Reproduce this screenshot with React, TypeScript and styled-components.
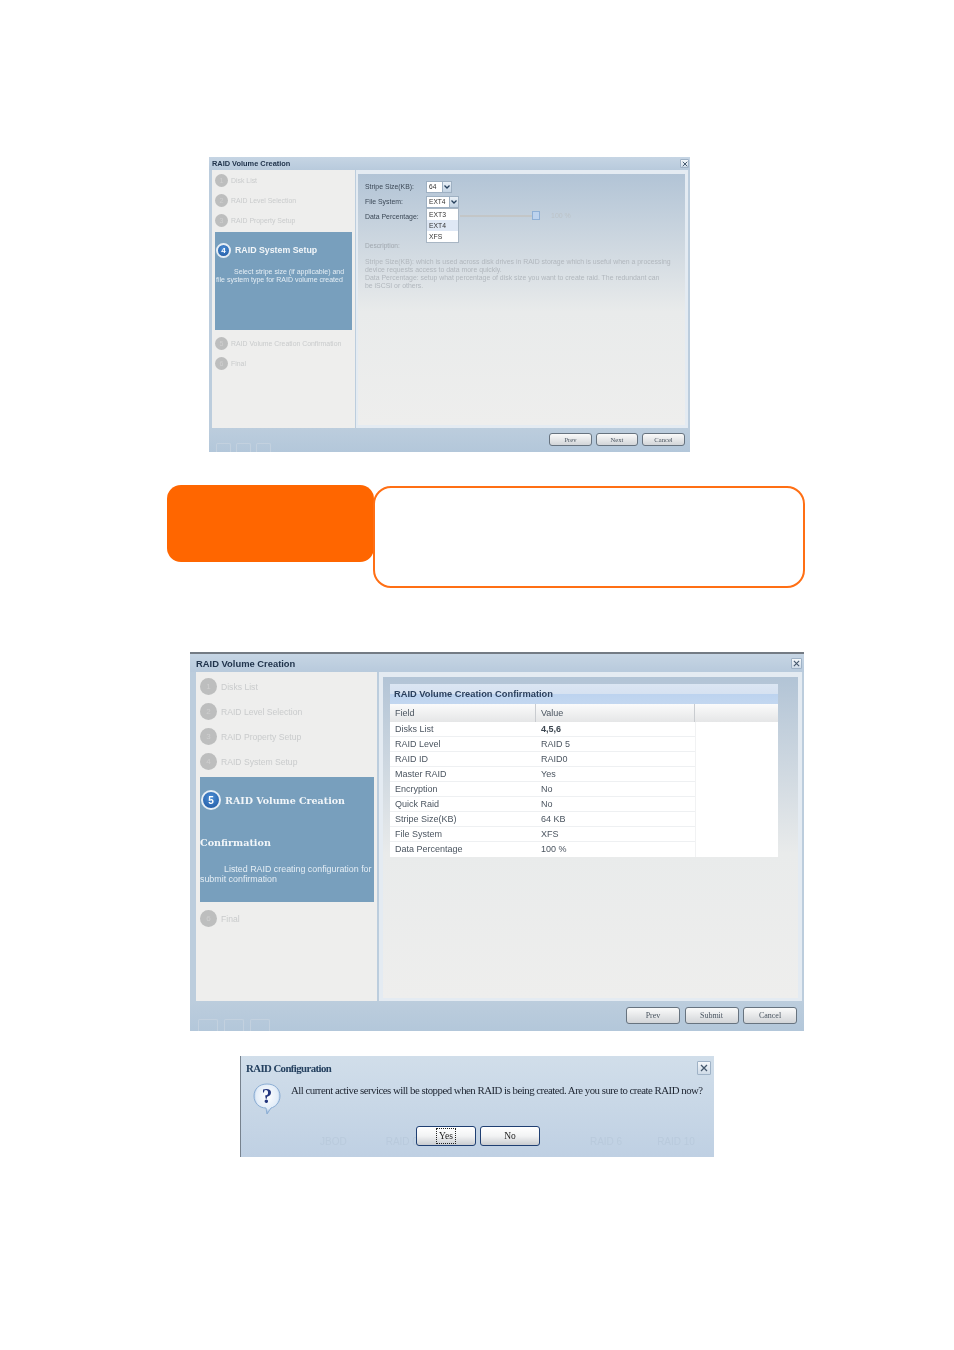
import React from 'react';
import styled, { createGlobalStyle } from 'styled-components';

const GlobalStyle = createGlobalStyle`
  html, body {
    margin: 0;
    padding: 0;
    background: #ffffff;
  }
  body {
    font-family: "Liberation Sans", Arial, sans-serif;
  }
`;

const Page = styled.div`
  width: 954px;
  height: 1350px;
  padding-top: 157px;
  box-sizing: border-box;
  overflow: hidden;
`;

const Window = styled.div<{ $large?: boolean }>`
  position: relative;
  display: flex;
  flex-direction: column;
  width: ${p => (p.$large ? '614px' : '481px')};
  height: ${p => (p.$large ? '379px' : '295px')};
  margin-left: ${p => (p.$large ? '190px' : '209px')};
  margin-top: ${p => (p.$large ? '64px' : '0')};
  background: #bccddd;
  border-top: ${p => (p.$large ? '2px solid #747b84' : '0')};
  box-sizing: border-box;
  filter: blur(${p => (p.$large ? '0.5px' : '0.25px')});
`;

const TitleBar = styled.div<{ $large?: boolean }>`
  display: flex;
  align-items: center;
  justify-content: space-between;
  flex: none;
  height: ${p => (p.$large ? '18px' : '13px')};
  padding: ${p => (p.$large ? '0 2px 0 6px' : '0 1px 0 3px')};
  background: linear-gradient(#c6d5e4, #b8cadc);
  color: #21344c;
  font-size: ${p => (p.$large ? '9.4px' : '7.4px')};
  font-weight: 700;
`;

const CloseBox = styled.span<{ $size: number }>`
  display: flex;
  align-items: center;
  justify-content: center;
  width: ${p => p.$size}px;
  height: ${p => p.$size}px;
  background: linear-gradient(#f4f7fa, #cfdbe8);
  border: 1px solid #9fb2c6;
  border-radius: 1px;
  box-sizing: border-box;
  color: #44576c;
`;

const Body = styled.div<{ $large?: boolean }>`
  display: flex;
  flex: none;
  height: ${p => (p.$large ? '329px' : '258px')};
  gap: ${p => (p.$large ? '2px' : '1px')};
  padding-left: ${p => (p.$large ? '6px' : '3px')};
`;

const Sidebar = styled.div<{ $large?: boolean }>`
  display: flex;
  flex-direction: column;
  flex: none;
  width: ${p => (p.$large ? '181px' : '143px')};
  padding: ${p => (p.$large ? '2px 3px 0 4px' : '0 3px 0 3px')};
  box-sizing: border-box;
  background: #eeeeed;
`;

const Step = styled.div<{ $large?: boolean }>`
  display: flex;
  align-items: center;
  flex: none;
  height: ${p => (p.$large ? '25px' : '20px')};
  gap: ${p => (p.$large ? '4px' : '3px')};
  color: #c9cbcc;
  font-size: ${p => (p.$large ? '8.6px' : '6.9px')};
  white-space: nowrap;
`;

const StepDot = styled.span<{ $large?: boolean }>`
  display: flex;
  align-items: center;
  justify-content: center;
  flex: none;
  width: ${p => (p.$large ? '17px' : '13px')};
  height: ${p => (p.$large ? '17px' : '13px')};
  border-radius: 50%;
  background: #bdbebe;
  color: #cfcfcf;
  font-size: ${p => (p.$large ? '8px' : '7px')};
`;

const ActivePanel = styled.div<{ $large?: boolean }>`
  flex: none;
  height: ${p => (p.$large ? '125px' : '98px')};
  margin: ${p => (p.$large ? '3px 0 4px' : '2px 0 3px')};
  padding-top: ${p => (p.$large ? '13px' : '8px')};
  box-sizing: border-box;
  background: #789fbd;
  color: #ffffff;
`;

const ActiveHead = styled.div<{ $large?: boolean }>`
  display: flex;
  align-items: center;
  height: 20px;
  gap: 4px;
  padding-left: 1px;
  font-family: ${p => (p.$large ? '"DejaVu Serif", serif' : '"Liberation Sans", sans-serif')};
  font-size: ${p => (p.$large ? '9.5px' : '8.8px')};
  font-weight: 700;
  color: #f2f6f9;
  white-space: nowrap;
`;

const ActiveDot = styled.span<{ $large?: boolean }>`
  display: flex;
  align-items: center;
  justify-content: center;
  flex: none;
  width: ${p => (p.$large ? '20px' : '15px')};
  height: ${p => (p.$large ? '20px' : '15px')};
  box-sizing: border-box;
  border: 2px solid #e6eef5;
  border-radius: 50%;
  background: radial-gradient(circle at 50% 35%, #4d8fd6, #1d559f);
  color: #ffffff;
  font-family: "Liberation Sans", sans-serif;
  font-size: ${p => (p.$large ? '10px' : '8px')};
  font-weight: 700;
`;

const TitleTail = styled.div`
  height: 20px;
  margin-top: 23px;
  line-height: 20px;
  font-family: "DejaVu Serif", serif;
  font-size: 9.6px;
  font-weight: 700;
  color: #f2f6f9;
`;

const ActiveText = styled.div<{ $large?: boolean }>`
  margin-top: ${p => (p.$large ? '11px' : '8px')};
  padding-left: ${p => (p.$large ? '0' : '1px')};
  font-size: ${p => (p.$large ? '8.9px' : '7px')};
  line-height: ${p => (p.$large ? '10px' : '8px')};
  white-space: nowrap;
  color: #e4edf4;
`;

const Indent = styled.span<{ $width: number }>`
  display: inline-block;
  width: ${p => p.$width}px;
`;

const Content = styled.div<{ $large?: boolean }>`
  display: flex;
  flex: none;
  width: ${p => (p.$large ? '423px' : '332px')};
  padding: ${p => (p.$large ? '5px 4px 3px 4px' : '4px 3px 3px 2px')};
  box-sizing: border-box;
  background: #e4ebf2;
`;

const ContentInner = styled.div<{ $large?: boolean }>`
  position: relative;
  flex: 1;
  padding: ${p => (p.$large ? '7px 20px 0 7px' : '5px 12px 0 7px')};
  background: linear-gradient(#b2c4d6 0%, #d0d9e1 30%, #e9ebeb 55%, #eeeeed 100%);
`;

const FormRow = styled.div`
  display: flex;
  align-items: center;
  height: 15px;
  color: #3b4856;
  font-size: 6.9px;
`;

const FormLabel = styled.span`
  flex: none;
  width: 61px;
`;

const SelectBox = styled.span<{ $width: number }>`
  display: flex;
  align-items: center;
  width: ${p => p.$width}px;
  height: 12px;
  padding-left: 2px;
  box-sizing: border-box;
  background: #ffffff;
  border: 1px solid #9eb0c2;
  border-right: 0;
  color: #333333;
  font-size: 6.6px;
`;

const SelectArrow = styled.span`
  display: flex;
  align-items: center;
  justify-content: center;
  width: 10px;
  height: 12px;
  box-sizing: border-box;
  background: linear-gradient(#e9f0f7, #c3d3e3);
  border: 1px solid #9eb0c2;
  color: #27405c;
`;

const SliderTrack = styled.span`
  position: absolute;
  left: 102px;
  top: 41px;
  width: 74px;
  height: 2px;
  background: #c3c6c7;
`;

const SliderThumb = styled.span`
  position: absolute;
  left: 174px;
  top: 37px;
  width: 8px;
  height: 9px;
  box-sizing: border-box;
  background: #bdd3ee;
  border: 1px solid #8fb0d6;
`;

const SliderValue = styled.span`
  position: absolute;
  left: 193px;
  top: 38px;
  color: #bcc3c8;
  font-size: 7px;
`;

const Dropdown = styled.div`
  position: absolute;
  left: 68px;
  top: 34px;
  width: 33px;
  height: 35px;
  box-sizing: border-box;
  background: #ffffff;
  border: 1px solid #a8b6c4;
  z-index: 2;
`;

const DropdownItem = styled.div<{ $active?: boolean }>`
  height: 11px;
  padding-left: 2px;
  line-height: 11px;
  color: #333333;
  font-size: 6.8px;
  background: ${p => (p.$active ? '#dfe8f5' : 'transparent')};
`;

const DescriptionHead = styled.div`
  margin-top: 18px;
  color: #a1a8af;
  font-size: 6.6px;
  line-height: 8px;
`;

const DescriptionText = styled.div`
  margin-top: 8px;
  color: #b1b7bd;
  font-size: 6.9px;
  line-height: 8px;
  white-space: nowrap;
`;

const TableHost = styled.div`
  width: 388px;
`;

const TableTitle = styled.div`
  height: 20px;
  padding-left: 4px;
  line-height: 20px;
  box-sizing: border-box;
  background: linear-gradient(#dbe6f3 0%, #d6e2f1 48%, #bcd3ef 50%, #c3d7f0 100%);
  color: #2a3f5c;
  font-size: 9.3px;
  font-weight: 700;
`;

const TableGrid = styled.div`
  display: grid;
  grid-template-columns: 146px 159px 83px;
  background: #ffffff;
`;

const HeadCell = styled.div<{ $end?: boolean }>`
  display: flex;
  align-items: center;
  height: 18px;
  padding-left: 5px;
  box-sizing: border-box;
  background: linear-gradient(#fbfbfb, #e5e6e7);
  border-right: 1px solid ${p => (p.$end ? 'transparent' : '#c9ccd0')};
  color: #4b5560;
  font-size: 9px;
`;

const Cell = styled.div<{ $strong?: boolean; $last?: boolean }>`
  display: flex;
  align-items: center;
  height: 15px;
  padding-left: 5px;
  box-sizing: border-box;
  border-bottom: 1px solid ${p => (p.$last ? 'transparent' : '#eef0f2')};
  color: ${p => (p.$strong ? '#3c4650' : '#4b5560')};
  font-size: 9px;
  font-weight: ${p => (p.$strong ? 700 : 400)};
`;

const EmptyCell = styled.div`
  height: 15px;
  border-left: 1px solid #f1f2f3;
`;

const Footer = styled.div<{ $large?: boolean }>`
  position: relative;
  flex: 1;
  display: flex;
  justify-content: flex-end;
  align-items: flex-start;
  gap: ${p => (p.$large ? '4.5px' : '4px')};
  padding: ${p => (p.$large ? '6px 7px 0 0' : '5px 5px 0 0')};
  background: linear-gradient(#bccddd, #b3c7da);
`;

const WizardButton = styled.button<{ $large?: boolean; $width: number }>`
  width: ${p => p.$width}px;
  height: ${p => (p.$large ? '17px' : '13px')};
  padding: 0;
  background: linear-gradient(#fafafa, #d2d5d8);
  border: 1px solid #67737f;
  border-radius: 3px;
  color: #4a5560;
  font-family: "Liberation Serif", serif;
  font-size: ${p => (p.$large ? '8px' : '6.6px')};
`;

const GhostBar = styled.div<{ $large?: boolean }>`
  position: absolute;
  left: ${p => (p.$large ? '8px' : '7px')};
  bottom: 0;
  display: flex;
  gap: ${p => (p.$large ? '6px' : '5px')};
`;

const GhostIcon = styled.span<{ $large?: boolean }>`
  width: ${p => (p.$large ? '20px' : '15px')};
  height: ${p => (p.$large ? '12px' : '9px')};
  border: 1px solid #c3d1df;
  border-bottom: 0;
  border-radius: 2px 2px 0 0;
  box-sizing: border-box;
`;

const CalloutRow = styled.div`
  display: flex;
  align-items: flex-start;
  margin: 33px 0 0 167px;
`;

const CalloutTag = styled.div`
  flex: none;
  width: 207px;
  height: 77px;
  background: #ff6600;
  border-radius: 14px;
`;

const CalloutBox = styled.div`
  flex: none;
  width: 432px;
  height: 102px;
  margin: 1px 0 0 -1px;
  box-sizing: border-box;
  background: #ffffff;
  border: 2px solid #ff6f14;
  border-radius: 18px;
`;

const Dialog = styled.div`
  position: relative;
  width: 474px;
  height: 101px;
  margin: 25px 0 0 240px;
  box-sizing: border-box;
  background: linear-gradient(#d1deea, #bfd0e3);
  border-left: 1px solid #77828e;
  filter: blur(0.25px);
`;

const DialogTitleRow = styled.div`
  display: flex;
  align-items: center;
  justify-content: space-between;
  height: 24px;
  padding: 0 3px 0 5px;
  color: #24405f;
  font-family: "Liberation Serif", serif;
  font-size: 10.8px;
  font-weight: 700;
  letter-spacing: -0.58px;
`;

const DialogBody = styled.div`
  display: flex;
  align-items: flex-start;
  height: 46px;
  padding-left: 11px;
  gap: 9px;
`;

const QuestionIcon = styled.span`
  flex: none;
  margin-top: 2px;
`;

const DialogMessage = styled.div`
  margin-top: 4px;
  color: #1d2430;
  font-family: "Liberation Serif", serif;
  font-size: 10.8px;
  letter-spacing: -0.49px;
  white-space: nowrap;
`;

const DialogActions = styled.div`
  position: relative;
  display: flex;
  justify-content: center;
  gap: 4px;
  padding-left: 1px;
  z-index: 1;
`;

const DialogButton = styled.button`
  display: flex;
  align-items: center;
  justify-content: center;
  width: 60px;
  height: 20px;
  padding: 0;
  background: linear-gradient(#ffffff 0%, #f2f3f4 50%, #c9ccd0 100%);
  border: 1px solid #1f3f72;
  border-radius: 3px;
  color: #222222;
  font-family: "Liberation Serif", serif;
  font-size: 9.5px;
`;

const FocusText = styled.span`
  padding: 0 2px;
  outline: 1px dotted #222222;
  line-height: 14px;
`;

const GhostRow = styled.div`
  position: absolute;
  left: 79px;
  bottom: 10px;
  display: flex;
  color: #b9cadc;
  font-size: 10px;
`;

const GhostLabel = styled.span<{ $gap: number }>`
  margin-left: ${p => p.$gap}px;
`;

const Chevron = () => (
  <svg width="6" height="4" viewBox="0 0 6 4">
    <path d="M0.5 0.5 L3 3 L5.5 0.5" fill="none" stroke="currentColor" strokeWidth="1.3" />
  </svg>
);

const CloseIcon = ({ size }: { size: number }) => (
  <svg width={size} height={size} viewBox="0 0 8 8">
    <path d="M1 1 L7 7 M7 1 L1 7" stroke="currentColor" strokeWidth="1.3" />
  </svg>
);

const BubbleIcon = () => (
  <svg width="30" height="34" viewBox="0 0 30 34">
    <defs>
      <radialGradient id="bubble" cx="50%" cy="40%" r="60%">
        <stop offset="0%" stopColor="#ffffff" />
        <stop offset="70%" stopColor="#e3edf8" />
        <stop offset="100%" stopColor="#7fa6d3" />
      </radialGradient>
    </defs>
    <path
      d="M15 2 C23 2 28 7 28 14 C28 21 23 25 19 26 L15 32 L14 26 C7 26 2 21 2 14 C2 7 7 2 15 2 Z"
      fill="url(#bubble)"
      stroke="#8caed4"
      strokeWidth="1"
    />
    <text x="15" y="21" textAnchor="middle" fontFamily="Liberation Serif, serif" fontSize="21" fontWeight="700" fill="#23367e">
      ?
    </text>
  </svg>
);

const confirmRows = [
  ['Disks List', '4,5,6'],
  ['RAID Level', 'RAID 5'],
  ['RAID ID', 'RAID0'],
  ['Master RAID', 'Yes'],
  ['Encryption', 'No'],
  ['Quick Raid', 'No'],
  ['Stripe Size(KB)', '64 KB'],
  ['File System', 'XFS'],
  ['Data Percentage', '100 %'],
];

const WizardSteps = ({ items, large, start }: { items: string[]; large?: boolean; start: number }) => (
  <>
    {items.map((label, i) => (
      <Step key={label} $large={large}>
        <StepDot $large={large}>{start + i}</StepDot>
        {label}
      </Step>
    ))}
  </>
);

const WizardFooter = ({ large, next }: { large?: boolean; next: string }) => {
  const widths = large ? [54, 54, 54] : [43, 42, 43];
  return (
    <Footer $large={large}>
      <GhostBar $large={large}>
        <GhostIcon $large={large} />
        <GhostIcon $large={large} />
        <GhostIcon $large={large} />
      </GhostBar>
      <WizardButton $large={large} $width={widths[0]}>Prev</WizardButton>
      <WizardButton $large={large} $width={widths[1]}>{next}</WizardButton>
      <WizardButton $large={large} $width={widths[2]}>Cancel</WizardButton>
    </Footer>
  );
};

const SystemSetupWindow = () => (
  <Window>
    <TitleBar>
      RAID Volume Creation
      <CloseBox $size={9}><CloseIcon size={6} /></CloseBox>
    </TitleBar>
    <Body>
      <Sidebar>
        <WizardSteps items={['Disk List', 'RAID Level Selection', 'RAID Property Setup']} start={1} />
        <ActivePanel>
          <ActiveHead>
            <ActiveDot>4</ActiveDot>
            RAID System Setup
          </ActiveHead>
          <ActiveText>
            <Indent $width={18} />Select stripe size (if applicable) and<br />
            file system type for RAID volume created
          </ActiveText>
        </ActivePanel>
        <WizardSteps items={['RAID Volume Creation Confirmation', 'Final']} start={5} />
      </Sidebar>
      <Content>
        <ContentInner>
          <FormRow>
            <FormLabel>Stripe Size(KB):</FormLabel>
            <SelectBox $width={16}>64</SelectBox>
            <SelectArrow><Chevron /></SelectArrow>
          </FormRow>
          <FormRow>
            <FormLabel>File System:</FormLabel>
            <SelectBox $width={23}>EXT4</SelectBox>
            <SelectArrow><Chevron /></SelectArrow>
          </FormRow>
          <FormRow>
            <FormLabel>Data Percentage:</FormLabel>
          </FormRow>
          <SliderTrack />
          <SliderThumb />
          <SliderValue>100 %</SliderValue>
          <Dropdown>
            <DropdownItem>EXT3</DropdownItem>
            <DropdownItem $active>EXT4</DropdownItem>
            <DropdownItem>XFS</DropdownItem>
          </Dropdown>
          <DescriptionHead>Description:</DescriptionHead>
          <DescriptionText>
            Stripe Size(KB): which is used across disk drives in RAID storage which is useful when a processing<br />
            device requests access to data more quickly.<br />
            Data Percentage: setup what percentage of disk size you want to create raid. The redundant can<br />
            be iSCSI or others.
          </DescriptionText>
        </ContentInner>
      </Content>
    </Body>
    <WizardFooter next="Next" />
  </Window>
);

const ConfirmationWindow = () => (
  <Window $large>
    <TitleBar $large>
      RAID Volume Creation
      <CloseBox $size={11}><CloseIcon size={7} /></CloseBox>
    </TitleBar>
    <Body $large>
      <Sidebar $large>
        <WizardSteps large items={['Disks List', 'RAID Level Selection', 'RAID Property Setup', 'RAID System Setup']} start={1} />
        <ActivePanel $large>
          <ActiveHead $large>
            <ActiveDot $large>5</ActiveDot>
            RAID Volume Creation
          </ActiveHead>
          <TitleTail>Confirmation</TitleTail>
          <ActiveText $large>
            <Indent $width={24} />Listed RAID creating configuration for<br />
            submit confirmation
          </ActiveText>
        </ActivePanel>
        <WizardSteps large items={['Final']} start={6} />
      </Sidebar>
      <Content $large>
        <ContentInner $large>
          <TableHost>
            <TableTitle>RAID Volume Creation Confirmation</TableTitle>
            <TableGrid>
              <HeadCell>Field</HeadCell>
              <HeadCell>Value</HeadCell>
              <HeadCell $end />
              {confirmRows.map(([field, value], i) => (
                <React.Fragment key={field}>
                  <Cell $last={i === confirmRows.length - 1}>{field}</Cell>
                  <Cell $last={i === confirmRows.length - 1} $strong={i === 0}>{value}</Cell>
                  <EmptyCell />
                </React.Fragment>
              ))}
            </TableGrid>
          </TableHost>
        </ContentInner>
      </Content>
    </Body>
    <WizardFooter large next="Submit" />
  </Window>
);

const ConfirmDialog = () => (
  <Dialog>
    <DialogTitleRow>
      RAID Configuration
      <CloseBox $size={14}><CloseIcon size={8} /></CloseBox>
    </DialogTitleRow>
    <DialogBody>
      <QuestionIcon><BubbleIcon /></QuestionIcon>
      <DialogMessage>
        All current active services will be stopped when RAID is being created. Are you sure to create RAID now?
      </DialogMessage>
    </DialogBody>
    <GhostRow>
      <GhostLabel $gap={0}>JBOD</GhostLabel>
      <GhostLabel $gap={39}>RAID 0</GhostLabel>
      <GhostLabel $gap={172}>RAID 6</GhostLabel>
      <GhostLabel $gap={35}>RAID 10</GhostLabel>
    </GhostRow>
    <DialogActions>
      <DialogButton><FocusText>Yes</FocusText></DialogButton>
      <DialogButton>No</DialogButton>
    </DialogActions>
  </Dialog>
);

const App: React.FC = () => (
  <Page>
    <GlobalStyle />
    <SystemSetupWindow />
    <CalloutRow>
      <CalloutTag />
      <CalloutBox />
    </CalloutRow>
    <ConfirmationWindow />
    <ConfirmDialog />
  </Page>
);

export default App;
